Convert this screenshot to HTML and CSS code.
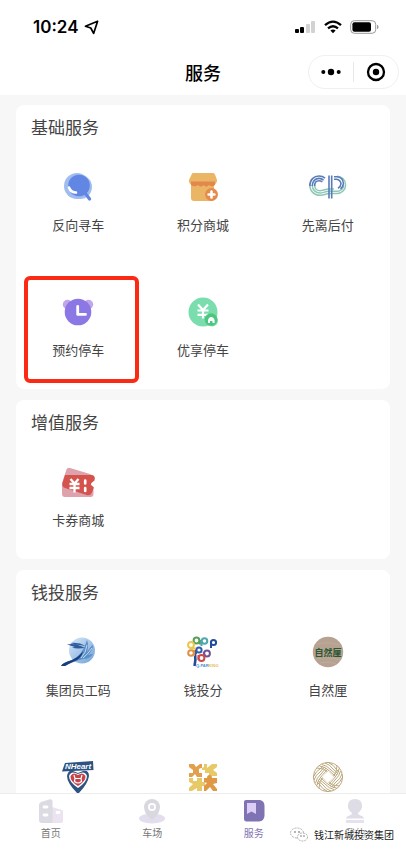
FILE: index.html
```html
<!DOCTYPE html>
<html lang="zh-CN">
<head>
  <meta charset="UTF-8">
  <meta name="viewport" content="width=device-width, initial-scale=1.0">
  <title>服务</title>
  <link rel="stylesheet" href="styles.css">
</head>
<body>
  <!-- Status bar -->
  <div class="status-bar">
    <div class="status-time">
      <span>10:24</span>
      <svg width="15" height="15" viewBox="0 0 15 15"><path d="M13.6 1.2 1.4 6.2 6.8 8 9.6 13.4Z" fill="none" stroke="#000" stroke-width="1.7" stroke-linejoin="round"/></svg>
    </div>
    <div class="status-icons">
      <svg width="21" height="14" viewBox="0 0 21 14">
        <rect x="0" y="9" width="4" height="4" rx="1"/>
        <rect x="5" y="7" width="4" height="6" rx="1"/>
        <rect x="11" y="4" width="4" height="9" rx="1" fill="#d2d2d2"/>
        <rect x="16" y="1" width="4" height="12" rx="1" fill="#d2d2d2"/>
      </svg>
      <svg width="18" height="14" viewBox="0 0 18 14" fill="none" stroke="#000" stroke-width="2.3">
        <path d="M1 5.2Q9-2 17 5.2"/>
        <path d="M4 8.4Q9 4 14 8.4"/>
        <path d="M6.4 10.6Q9 8.6 11.6 10.6L9 13.2Z" fill="#000" stroke="none"/>
      </svg>
      <svg width="29" height="14" viewBox="0 0 29 14">
        <rect x="0.7" y="0.7" width="25" height="12.6" rx="3.6" fill="none" stroke="#999" stroke-width="1"/>
        <rect x="2.4" y="2.3" width="18.6" height="9.4" rx="2"/>
        <path d="M27 4.8Q28.6 5.4 28.6 7T27 9.2Z" fill="#999"/>
      </svg>
    </div>
  </div>

  <!-- Title bar -->
  <header class="title-bar">
    <h1>服务</h1>
    <div class="capsule">
      <button type="button" aria-label="更多">
        <svg width="20" height="8" viewBox="0 0 20 8"><circle cx="2.3" cy="4" r="2"/><circle cx="10" cy="4" r="3.2"/><circle cx="17.7" cy="4" r="2"/></svg>
      </button>
      <button type="button" aria-label="关闭">
        <svg width="20" height="20" viewBox="0 0 20 20"><circle cx="10" cy="10" r="8" fill="none" stroke="#000" stroke-width="2.3"/><circle cx="10" cy="10" r="3.2"/></svg>
      </button>
    </div>
  </header>

  <main class="content">
    <section class="card">
      <h2>基础服务</h2>
      <div class="grid">
        <a class="item" href="#">
          <svg class="icon" viewBox="0 0 32 32">
            <circle cx="15" cy="15" r="13" fill="#a0bdef"/>
            <circle cx="18" cy="16" r="12" fill="#a0bdef"/>
            <circle cx="17" cy="14.5" r="10.8" fill="#6286e4"/>
            <path d="M23 22 27.6 28" stroke="#6286e4" stroke-width="3.2" stroke-linecap="round"/>
            <path d="M7 16.5Q8.6 21.4 14 21.6" fill="none" stroke="#fff" stroke-width="2.5" stroke-linecap="round"/>
          </svg>
          <span>反向寻车</span>
        </a>
        <a class="item" href="#">
          <svg class="icon" viewBox="0 0 32 32">
            <path d="M4 13H27V27Q27 30 24 30H7Q4 30 4 27Z" fill="#ebb566"/>
            <path d="M6 2H26Q27 2 28 3.4L30 9Q30 12.5 27 14H5Q1.5 12.5 2 9L4.6 3.4Q5.2 2 6 2Z" fill="#ebb566"/>
            <path d="M4 10.5H28V14Q25 16.5 22 14Q19.5 17 16.5 14Q14 17 11 14Q7.5 16.5 4 14Z" fill="#e3884b"/>
            <circle cx="24.5" cy="23.5" r="6.5" fill="#e58b4d"/>
            <path d="M24.5 20.6V26.4M21.6 23.5H27.4" stroke="#fff" stroke-width="2.6" stroke-linecap="round"/>
          </svg>
          <span>积分商城</span>
        </a>
        <a class="item" href="#">
          <svg class="icon icon-wide" viewBox="0 0 40 32" fill="none">
            <g stroke="#8ec7b8" stroke-width="1.5">
              <path d="M1.8 14C1.800 20 6 24.300 12 24.300C17 24.300 18 22.500 21 22.500H29A8.600 8.600 0 0 0 29 5.300"/>
              <path d="M4.200 14C4.200 19 8 22 12 22C16 22 17 20.200 21 20.200H29A6.300 6.300 0 0 0 35.600 14"/>
              <path d="M6.600 14C6.600 17.500 9 19.700 12 19.700C15 19.700 17 18 21 18H26"/>
            </g>
            <g stroke="#587cb9" stroke-width="1.6">
              <path d="M1.800 15C1.800 8.500 6 5 11 5C13.500 5 15.500 5.800 17 7.200"/>
              <path d="M4.200 15C4.200 10 7.500 7.400 11 7.400C13 7.400 14.500 8 15.600 9.200"/>
              <path d="M6.600 15C6.600 11.500 8.500 9.800 11 9.800C12.500 9.800 13.500 10.300 14.300 11"/>
              <path d="M21 4.500V27.500M23.700 4.500V27.500"/>
              <path d="M26 5.800H29Q35.200 6.500 35.400 12.500Q35.200 16 32.500 18"/>
              <path d="M26 8.200H28.500Q32.600 8.800 33 12.800Q32.800 15.500 30 17.200"/>
            </g>
          </svg>
          <span>先离后付</span>
        </a>
        <a class="item marked" href="#">
          <svg class="icon" viewBox="0 0 32 32">
            <circle cx="5.5" cy="8.5" r="4.7" fill="#c1a6ec"/>
            <circle cx="26.5" cy="8.5" r="4.7" fill="#c1a6ec"/>
            <circle cx="16" cy="16" r="13.3" fill="#8b78e4"/>
            <path d="M15.7 10.5V18.4H23.5" fill="none" stroke="#fff" stroke-width="2.8" stroke-linecap="round" stroke-linejoin="round"/>
          </svg>
          <span>预约停车</span>
        </a>
        <a class="item" href="#">
          <svg class="icon" viewBox="0 0 32 32">
            <circle cx="16" cy="16" r="14.5" fill="#79ddae"/>
            <path d="M11 8.5 16 14 21 8.500M16 14V22.500M10.500 14.500H21.500M10.500 18.800H21.500" fill="none" stroke="#fff" stroke-width="2.2"/>
            <circle cx="25" cy="24.5" r="6" fill="#79ddae"/>
            <circle cx="24" cy="23.5" r="6.3" fill="#4fc680"/>
            <path d="M21 27V24.500Q21.500 21 24.200 21T27.600 24.500V27H25.500V25H23V27Z" fill="#fff"/>
          </svg>
          <span>优享停车</span>
        </a>
      </div>
    </section>

    <section class="card">
      <h2>增值服务</h2>
      <div class="grid">
        <a class="item" href="#">
          <svg class="icon" viewBox="0 0 32 32">
            <path d="M8 2 28 8Q33 10 31 15L28.500 18 31.500 21V28Q31.500 31 28.500 31H3Q0 31 0 28V17L4 5Q5 1 8 2Z" fill="#dda2ac"/>
            <path d="M3 9H29Q34 9 32.500 14.500Q29 16.500 28.800 19L31.800 21.500 30 26.500Q28.500 30 24.500 29L3 22Q-0.500 20.500 0.500 17Z" fill="#d4534d"/>
            <path d="M8.500 13 12.500 17.500 16.500 13M12.500 17V26.500M7.500 18H17.500M7.500 22H17.500" fill="none" stroke="#fff" stroke-width="2.3"/>
            <path d="M23.200 14.500V17.500M23.200 22V25" stroke="#fff" stroke-width="2.600" stroke-linecap="round"/>
          </svg>
          <span>卡券商城</span>
        </a>
      </div>
    </section>

    <section class="card">
      <h2>钱投服务</h2>
      <div class="grid">
        <a class="item" href="#">
          <svg class="icon icon-wide" viewBox="0 0 40 32">
            <defs>
              <linearGradient id="globe" x1="0" y1="0" x2="1" y2="1"><stop offset="0" stop-color="#d9e8f8"/><stop offset="1" stop-color="#71a1d8"/></linearGradient>
            </defs>
            <circle cx="24" cy="14.500" r="13" fill="url(#globe)"/>
            <path d="M3 30Q4 27 14 24Q25 19 29 4Q31 9 29 16Q33 10 35 9Q35 14 30 19Q33 18 35 18Q32 23 25 23Q14 26 7 30Z" fill="#5b8fc8"/>
            <path d="M3 30Q4 27 14 24Q21 21 25 15Q24 21 19 24Q12 27 7 30Z" fill="#173e7a"/>
            <path d="M9 8.500Q17 6.500 27 12Q18 13 14 11.500L17 11ZM12 7Q20 5.500 28 10L18 8.500Z" fill="#2c5c9c"/>
            <path d="M23 22Q28 17 29 9M25 22Q30 18 34 12" fill="none" stroke="#dceaf8" stroke-width="0.8"/>
          </svg>
          <span>集团员工码</span>
        </a>
        <a class="item" href="#">
          <svg class="icon" viewBox="0 0 32 32" fill="none" stroke-width="2">
            <path d="M7.500 30Q9 24 8 17" stroke="#224d9c" stroke-width="2.600"/>
            <circle cx="12" cy="14" r="2.600" stroke="#2f5eb0"/><path d="M9 13V18" stroke="#2f5eb0"/>
            <path d="M24 12V5" stroke="#224d9c"/><circle cx="26.500" cy="6.500" r="2.600" stroke="#224d9c"/>
            <circle cx="9.500" cy="4.500" r="2.900" stroke="#57a05a"/><path d="M13 4V8.500" stroke="#57a05a"/>
            <circle cx="17.500" cy="5" r="2.800" stroke="#50a7ae"/><path d="M14.500 5V10" stroke="#50a7ae"/>
            <circle cx="4" cy="9" r="2.900" stroke="#eac94a"/><path d="M5 12.500H9" stroke="#eac94a"/>
            <circle cx="4" cy="17" r="2.800" stroke="#df9144"/><path d="M7 14V20" stroke="#df9144"/>
            <circle cx="20" cy="17.500" r="2.900" stroke="#705491"/><path d="M16.500 16 18 20" stroke="#705491"/>
            <circle cx="14.500" cy="22" r="2.900" stroke="#ce4948"/><path d="M11.500 19V24" stroke="#ce4948"/>
            <text class="logo-text" x="9" y="31" stroke="none"><tspan fill="#4a91ce">Q-PAR</tspan><tspan fill="#edb95c">KING</tspan></text>
          </svg>
          <span>钱投分</span>
        </a>
        <a class="item" href="#">
          <svg class="icon" viewBox="0 0 32 32">
            <circle cx="16" cy="16" r="15.2" fill="#b7a291"/>
            <path d="M5 8Q16 5 27 9M4 23Q16 20 28 24M8 27Q18 25 24 28" fill="none" stroke="#bfac9d"/>
            <text class="round-text" x="16" y="20" text-anchor="middle" fill="#285632">自然厘</text>
          </svg>
          <span>自然厘</span>
        </a>
        <a class="item" href="#" aria-label="NHeart">
          <svg class="icon" viewBox="0 0 32 32">
            <path d="M16 33Q5 22 5 15Q6 9 11 10L16 12 21 10Q27 9 27 15Q26 23 16 33Z" fill="#2c5381"/>
            <path d="M16 27Q7 21 7 15Q9 9 16 13Q23 9 25 15Q25 21 16 27Z" fill="#fff"/>
            <path d="M16 25Q8 20 8.500 15Q11 10.500 16 14Q21 10.500 23.500 15Q24 20 16 25Z" fill="#c54449"/>
            <path d="M12 14 13 17.500H19L20 14M13 17.500 12.500 20.500Q16 23.500 19.500 20.500L19 17.500" fill="none" stroke="#fff" stroke-width="1.200"/>
            <path d="M3 2 31 0 31.500 9 0 10.500Z" fill="#2c5381"/>
            <text class="heart-text" x="16" y="8" text-anchor="middle" fill="#fff">NHeart</text>
          </svg>
        </a>
        <a class="item" href="#">
          <svg class="icon" viewBox="0 0 32 32">
            <path d="M2 3H7L9 6 13 3H15V7Q11 7 12 10V12H15V16H10L8 13 5 16H2V12H6V9L2 6Z" fill="#e2a04c"/>
            <path d="M17 3H20V7L25 3H30V6L26 9 30 12V15H22V12H18V9L15 9V7L17 6Z" fill="#e7c967"/>
            <path d="M2 17H6V20H10V17H15V21H18V25H15V30H10V27L5 30H2V27L6 23 2 21Z" fill="#e7c967"/>
            <path d="M17 17H20Q20 14 22.500 14T25 17H30V22L26 23 30 28V30H26L23 26 19 30H17V25L20 22 17 21Z" fill="#df9846"/>
          </svg>
        </a>
        <a class="item" href="#">
          <svg class="icon" viewBox="0 0 32 32" fill="none" stroke="#bba77c">
            <circle cx="16" cy="16" r="14.600"/>
            <g id="coin">
              <path d="M5 7Q12 7 16 11L22 16M7.500 5Q13 5.500 17.500 10L23 15M10 3.500Q15 4.500 19 9L25 14"/>
              <path d="M13 2Q18 3.500 21 8L26 12.500M17 2Q22 4 24 8L27 11"/>
            </g>
            <use href="#coin" transform="rotate(90 16 16)"/>
            <use href="#coin" transform="rotate(180 16 16)"/>
            <use href="#coin" transform="rotate(270 16 16)"/>
            <path d="M16 10.500 21.500 16 16 21.500 10.500 16Z" fill="#fff" stroke="#fff"/>
          </svg>
        </a>
      </div>
    </section>
  </main>

  <!-- Bottom tabs -->
  <nav class="tab-bar">
    <a href="#">
      <svg width="26" height="26" viewBox="0 0 26 26">
        <path d="M14 9 24 12Q25 12.500 25 14V23Q25 25 23 25H12Z" fill="#ebe3ef"/>
        <path d="M3 4 12 1.200Q14.500 1 14.500 3V25H4Q1 25 1 22V7Q1 5 3 4Z" fill="#dcdae3"/>
        <path d="M6 9H9M6 17H9M19 14.500H21" stroke="#fff" stroke-width="2.800" stroke-linecap="round"/>
      </svg>
      <span>首页</span>
    </a>
    <a href="#">
      <svg width="26" height="26" viewBox="0 0 26 26">
        <ellipse cx="13" cy="20.500" rx="13" ry="5" fill="#e3deee"/>
        <path d="M13 22Q5 16 5 9A8 8 0 0 1 21 9Q21 16 13 22Z" fill="#d9d8df"/>
        <circle cx="13" cy="9" r="4" fill="#fff"/><circle cx="13" cy="9" r="2.200" fill="#dedae8"/>
      </svg>
      <span>车场</span>
    </a>
    <a class="active" href="#">
      <svg width="26" height="26" viewBox="0 0 26 26">
        <path d="M5 2H19Q23.500 3 23.500 8V18Q23 23 18 23.500H5Q3 23 3 21V4Q3 2 5 2Z" fill="#7f73b4"/>
        <path d="M6 5H15V16L10.500 13.500 6 16Z" fill="#dbcdf4"/>
      </svg>
      <span>服务</span>
    </a>
    <a href="#">
      <svg width="26" height="26" viewBox="0 0 26 26">
        <path d="M13 1Q20 1 20 8Q20 12 16 15Q16 17 20 18Q22 19 22 20.500H4Q4 19 6 18Q10 17 10 15Q6 12 6 8Q6 1 13 1Z" fill="#dedce4"/>
        <path d="M4 22H22V25H4Z" fill="#e7e1ef"/>
      </svg>
      <span>我的</span>
    </a>
    <div class="watermark">
      <svg width="20" height="16" viewBox="0 0 20 16">
        <g fill="#fff" stroke="#999" stroke-width="0.800" stroke-dasharray="2 1">
          <ellipse cx="8" cy="6" rx="6.500" ry="5"/>
          <ellipse cx="13.500" cy="10" rx="5" ry="4"/>
        </g>
        <g fill="#555"><circle cx="6" cy="5" r="0.800"/><circle cx="10" cy="5" r="0.800"/><circle cx="12" cy="9" r="0.700"/><circle cx="15" cy="9" r="0.700"/></g>
      </svg>
      <span>钱江新城投资集团</span>
    </div>
  </nav>
</body>
</html>
```
FILE: styles.css
```css
* {
  margin: 0;
  padding: 0;
  box-sizing: border-box;
}

body {
  font-family: "Noto Sans CJK SC", sans-serif;
  display: flex;
  flex-direction: column;
  height: 100vh;
  overflow: hidden;
  background-color: #f7f7f7;
  color: #444;
}

a {
  color: inherit;
  text-decoration: none;
}

svg {
  display: block;
}

/* Status bar */
.status-bar {
  display: flex;
  justify-content: space-between;
  align-items: center;
  padding: 17px 27px 13px 33px;
  background-color: #fff;
}

.status-time {
  display: flex;
  align-items: center;
  gap: 6px;
  font: 600 17px/20px Inter, sans-serif;
  color: #000;
}

.status-icons {
  display: flex;
  align-items: center;
  gap: 8px;
}

/* Title bar */
.title-bar {
  position: relative;
  flex-shrink: 0;
  height: 45px;
  background-color: #fff;
  color: #000;
}

.title-bar h1 {
  font-size: 18px;
  font-weight: 500;
  line-height: 44px;
  text-align: center;
}

.capsule {
  position: absolute;
  top: 5px;
  right: 7px;
  display: flex;
  width: 91px;
  height: 34px;
  border: 1px solid #f0f0f0;
  border-radius: 17px;
}

.capsule button {
  flex: 1;
  display: flex;
  justify-content: center;
  align-items: center;
  margin: 6px 0;
  border: none;
  background: none;
}

.capsule button + button {
  border-left: 1px solid #e8e8e8;
}

/* Service cards */
.content {
  flex: 1;
  min-height: 0;
  overflow-y: auto;
  scrollbar-width: none;
  display: flex;
  flex-direction: column;
  gap: 11px;
  padding: 10px 16px;
}

.card {
  flex-shrink: 0;
  background-color: #fff;
  border-radius: 8px;
}

.card h2 {
  height: 34px;
  padding: 10px 15px 0;
  font-size: 17px;
  font-weight: 400;
  line-height: 24px;
}

.grid {
  display: grid;
  grid-template-columns: repeat(3, 1fr);
}

.item {
  position: relative;
  display: flex;
  flex-direction: column;
  align-items: center;
  gap: 12px;
  height: 125px;
  padding-top: 32px;
  font-size: 13px;
  line-height: 20px;
}

.icon {
  width: 32px;
  height: 32px;
  overflow: visible;
}

.icon-wide {
  width: 40px;
}

/* Red frame round the chosen service */
.marked::after {
  content: "";
  position: absolute;
  inset: 12px 2px 6px 8px;
  border: 4px solid #fb2a14;
  border-radius: 6px;
}

.logo-text {
  font: 700 4px "Liberation Sans", sans-serif;
}

.round-text {
  font-size: 9px;
  font-weight: 700;
}

.heart-text {
  font: italic 700 8px "Liberation Sans", sans-serif;
}

/* Bottom tabs */
.tab-bar {
  position: relative;
  flex-shrink: 0;
  display: grid;
  grid-template-columns: repeat(4, 1fr);
  height: 60px;
  border-top: 1px solid #ececec;
  background-color: #fff;
}

.tab-bar a {
  display: flex;
  flex-direction: column;
  align-items: center;
  padding-top: 4px;
  font-size: 10px;
  line-height: 18px;
  color: #777;
}

.tab-bar .active {
  color: #8273b5;
}

.watermark {
  position: absolute;
  right: 12px;
  bottom: 10px;
  display: flex;
  align-items: center;
  gap: 5px;
  font-size: 10px;
  line-height: 16px;
  color: #222;
  text-shadow: 1px 1px 0 #fff, -1px -1px 0 #fff;
}
```
